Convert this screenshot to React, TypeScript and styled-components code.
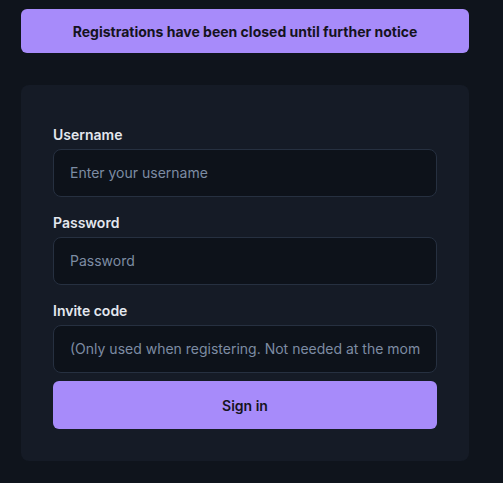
import { createGlobalStyle } from "styled-components";
import styled from "styled-components";

const Global = createGlobalStyle`
  html, body {
    margin: 0;
    padding: 0;
    background: #0f141c;
    font-family: Inter, "Noto Sans", sans-serif;
  }
`

export default function App() {
    return (
        <>
            <Global />
            <Page>
                <Banner>Registrations have been closed until further notice</Banner>
                <Card>
                    <Field>
                        <Label>Username</Label>
                        <Input placeholder="Enter your username" />
                    </Field>
                    <Field>
                        <Label>Password</Label>
                        <Input type="password" placeholder="Password" />
                    </Field>
                    <Field>
                        <Label>Invite code</Label>
                        <Input placeholder="(Only used when registering. Not needed at the moment)" />
                    </Field>
                    <Button>Sign in</Button>
                </Card>
            </Page>
        </>
    )
}

const Page = styled.div`
  width: 448px;
  padding: 9px 0 22px 21px;
  display: flex;
  flex-direction: column;
  gap: 32px;
`
const Banner = styled.div`
  height: 44px;
  border-radius: 6px;
  background: #a78bfa;
  color: #151320;
  font-size: 14px;
  font-weight: 700;
  display: flex;
  align-items: center;
  justify-content: center;
`
const Card = styled.div`
  background: #151b26;
  border-radius: 8px;
  padding: 40px 32px 32px;
  display: flex;
  flex-direction: column;
`
const Field = styled.div`
  display: flex;
  flex-direction: column;
  margin-bottom: 16px;
  &:last-of-type {
    margin-bottom: 8px;
  }
`
const Label = styled.label`
  color: #e3e7ee;
  font-size: 14px;
  font-weight: 600;
  line-height: 20px;
  margin-bottom: 4px;
`
const Input = styled.input`
  box-sizing: border-box;
  height: 48px;
  width: 100%;
  background: #0d121a;
  border: 1px solid #263040;
  border-radius: 8px;
  padding: 0 16px 1px;
  color: #e3e7ee;
  font-family: Inter, "Noto Sans", sans-serif;
  font-size: 14px;
  outline: none;
  &::placeholder {
    color: #7d8ca3;
  }
`
const Button = styled.button`
  height: 48px;
  border: none;
  border-radius: 6px;
  background: #a78bfa;
  color: #151320;
  font-family: Inter, "Noto Sans", sans-serif;
  font-size: 14px;
  font-weight: 600;
  cursor: pointer;
`
